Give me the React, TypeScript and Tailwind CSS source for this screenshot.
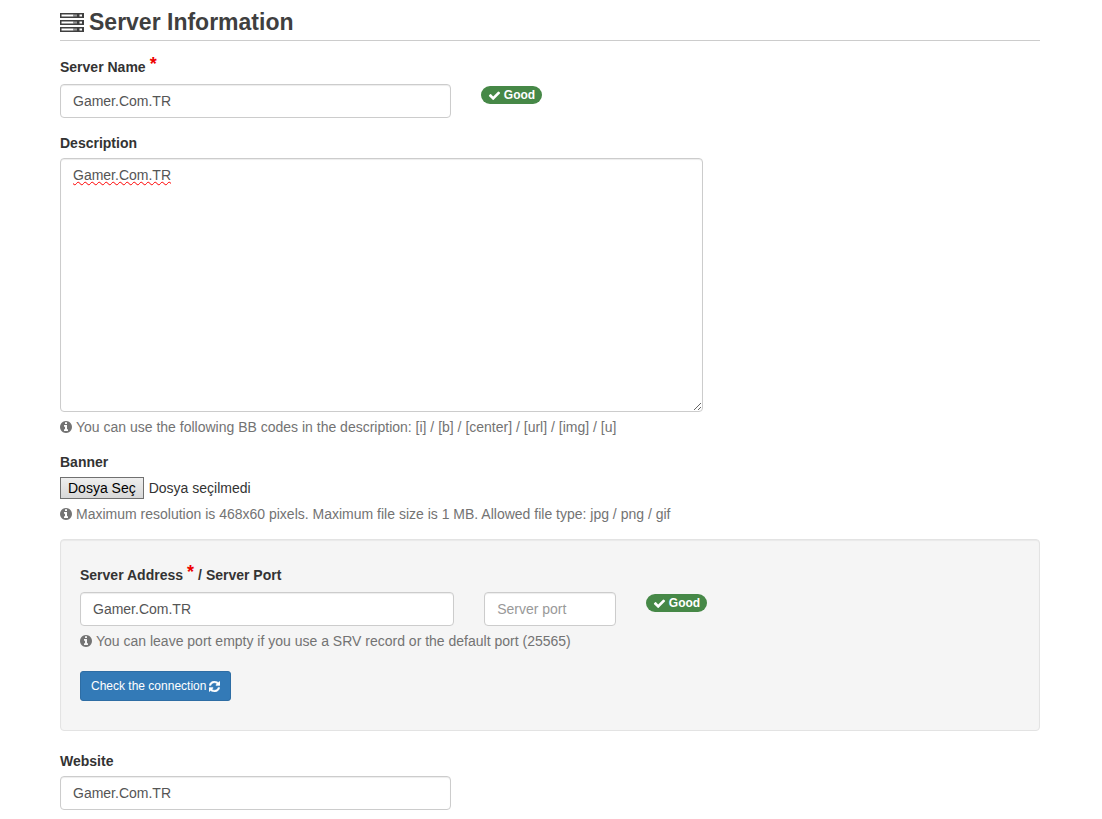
import { useState } from 'react'
import type { ReactNode } from 'react'

const controlClass =
  'block w-full rounded border border-[#ccc] bg-white px-3 text-sm leading-5 text-[#555] shadow-[inset_0_1px_1px_rgba(0,0,0,0.075)] outline-none placeholder:text-[#999] focus:border-[#66afe9]'

function ServerIcon() {
  return (
    <svg viewBox="0 0 24 19" className="h-[19px] w-6 shrink-0" aria-hidden="true">
      {[0, 7, 14].map((y) => (
        <g key={y}>
          <rect x="0" y={y} width="24" height="5" fill="#3f3f3f" />
          <rect x="1.5" y={y + 1.5} width="12" height="2" fill="#fff" />
          <rect x="13.5" y={y + 1.5} width="3.5" height="2" fill="#999" />
          <rect x="19.5" y={y + 1.5} width="2.5" height="2" fill="#fff" />
        </g>
      ))}
    </svg>
  )
}

function InfoIcon() {
  return (
    <svg viewBox="128 128 1536 1536" className="mr-1 h-3 w-3 shrink-0" fill="currentColor" aria-hidden="true">
      <path d="M1152 1376v-160q0-14-9-23t-23-9h-96v-512q0-14-9-23t-23-9h-320q-14 0-23 9t-9 23v160q0 14 9 23t23 9h96v320h-96q-14 0-23 9t-9 23v160q0 14 9 23t23 9h448q14 0 23-9t9-23zm-128-896v-160q0-14-9-23t-23-9h-192q-14 0-23 9t-9 23v160q0 14 9 23t23 9h192q14 0 23-9t9-23zm640 416q0 209-103 385.5t-279.5 279.5-385.5 103-385.5-103-279.5-279.5-103-385.5 103-385.5 279.5-279.5 385.5-103 385.5 103 279.5 279.5 103 385.5z" />
    </svg>
  )
}

function CheckIcon() {
  return (
    <svg viewBox="0 0 1792 1792" className="h-[13px] w-[13px] shrink-0" fill="currentColor" aria-hidden="true">
      <path d="M1671 566q0 40-28 68l-724 724-136 136q-28 28-68 28t-68-28l-136-136-362-362q-28-28-28-68t28-68l136-136q28-28 68-28t68 28l294 295 656-657q28-28 68-28t68 28l136 136q28 28 28 68z" />
    </svg>
  )
}

function RefreshIcon() {
  return (
    <svg
      viewBox="128 128 1536 1536"
      className="h-[11px] w-[11px] shrink-0"
      fill="currentColor"
      stroke="currentColor"
      strokeWidth="60"
      aria-hidden="true"
    >
      <path d="M1639 1056q0 5-1 7-64 268-268 434.5t-478 166.5q-146 0-282.5-55t-243.5-157l-129 129q-19 19-45 19t-45-19-19-45v-448q0-26 19-45t45-19h448q26 0 45 19t19 45-19 45l-137 137q71 66 161 102t187 36q134 0 250-65t186-179q11-17 53-117 8-23 30-23h192q13 0 22.5 9.5t9.5 22.5zm25-800v448q0 26-19 45t-45 19h-448q-26 0-45-19t-19-45 19-45l138-138q-148-137-349-137-134 0-250 65t-186 179q-11 17-53 117-8 23-30 23h-199q-13 0-22.5-9.5t-9.5-22.5v-7q65-268 270-434.5t480-166.5q146 0 284 55.5t245 156.5l130-129q19-19 45-19t45 19 19 45z" />
    </svg>
  )
}

function Required() {
  return <span className="text-lg leading-3.5 font-bold text-[#e00]">*</span>
}

function Hint({ children }: { children: ReactNode }) {
  return (
    <p className="mt-[5px] flex items-center text-sm leading-5 text-[#737373]">
      <InfoIcon />
      {children}
    </p>
  )
}

function GoodBadge() {
  return (
    <span className="mt-0.5 inline-flex h-[18px] items-center gap-[3px] rounded-full bg-[#468847] px-[7px] text-xs font-bold text-white">
      <CheckIcon />
      Good
    </span>
  )
}

export default function App() {
  const [name, setName] = useState('Gamer.Com.TR')
  const [description, setDescription] = useState('Gamer.Com.TR')
  const [fileName, setFileName] = useState('')
  const [address, setAddress] = useState('Gamer.Com.TR')
  const [port, setPort] = useState('')
  const [website, setWebsite] = useState('Gamer.Com.TR')

  return (
    <form
      className="bg-white pt-2 pr-[62px] pb-2 pl-[60px] font-['Liberation_Sans',Arial,sans-serif] text-sm leading-5 text-[#333]"
      onSubmit={(e) => e.preventDefault()}
    >
      <h1 className="mb-4 flex items-center gap-[5px] border-b border-[#ccc] pb-1 text-[23px] leading-7 font-bold text-[#3f3f3f]">
        <ServerIcon />
        Server Information
      </h1>

      {/* Server name */}
      <div className="mb-[15px]">
        <label htmlFor="server-name" className="mb-[7px] flex gap-1 font-bold">
          Server Name <Required />
        </label>
        <div className="grid grid-cols-12 items-start gap-[30px]">
          <div className="col-span-5">
            <input
              id="server-name"
              type="text"
              className={`${controlClass} h-[34px]`}
              value={name}
              onChange={(e) => setName(e.target.value)}
            />
          </div>
          <div className="col-span-3 flex">
            <GoodBadge />
          </div>
        </div>
      </div>

      {/* Description */}
      <div className="mb-[15px]">
        <label htmlFor="description" className="mb-[5px] block font-bold">
          Description
        </label>
        <div className="grid grid-cols-12 gap-[30px]">
          <textarea
            id="description"
            className={`${controlClass} col-span-8 h-[254px] resize py-1.5 underline decoration-[#f00] decoration-wavy decoration-1`}
            value={description}
            onChange={(e) => setDescription(e.target.value)}
          />
        </div>
        <Hint>You can use the following BB codes in the description: [i] / [b] / [center] / [url] / [img] / [u]</Hint>
      </div>

      {/* Banner */}
      <div className="mb-[15px]">
        <label htmlFor="banner" className="mb-[5px] block font-bold">
          Banner
        </label>
        <div className="relative flex items-center gap-[5px]">
          <input
            id="banner"
            type="file"
            accept=".jpg,.png,.gif"
            className="peer sr-only"
            onChange={(e) => setFileName(e.target.files?.[0]?.name ?? '')}
          />
          <label
            htmlFor="banner"
            className="h-[22px] border border-[#707070] bg-linear-to-b from-[#eee] to-[#d8d8d8] px-[7px] leading-5 text-black peer-focus-visible:border-[#66afe9]"
          >
            Dosya Seç
          </label>
          <span>{fileName || 'Dosya seçilmedi'}</span>
        </div>
        <Hint>Maximum resolution is 468x60 pixels. Maximum file size is 1 MB. Allowed file type: jpg / png / gif</Hint>
      </div>

      {/* Address and port */}
      <div className="mb-5 rounded border border-[#e3e3e3] bg-[#f5f5f5] px-[19px] pt-[25px] pb-[29px] shadow-[inset_0_1px_1px_rgba(0,0,0,0.05)]">
        <div className="mb-[7px] flex gap-1 font-bold">
          <label htmlFor="server-address" className="flex gap-1">
            Server Address <Required />
          </label>
          <span>/</span>
          <label htmlFor="server-port">Server Port</label>
        </div>
        <div className="grid grid-cols-12 items-start gap-[30px]">
          <div className="col-span-5">
            <input
              id="server-address"
              type="text"
              className={`${controlClass} h-[34px]`}
              value={address}
              onChange={(e) => setAddress(e.target.value)}
            />
          </div>
          <div className="col-span-2">
            <input
              id="server-port"
              type="text"
              placeholder="Server port"
              className={`${controlClass} h-[34px]`}
              value={port}
              onChange={(e) => setPort(e.target.value)}
            />
          </div>
          <div className="col-span-3 flex">
            <GoodBadge />
          </div>
        </div>
        <Hint>You can leave port empty if you use a SRV record or the default port (25565)</Hint>
        <button
          type="button"
          className="mt-5 flex h-[30px] cursor-pointer items-center gap-[3px] rounded-[3px] border border-[#2e6da4] bg-[#337ab7] px-2.5 text-xs text-white hover:bg-[#286090]"
        >
          Check the connection
          <RefreshIcon />
        </button>
      </div>

      {/* Website */}
      <div>
        <label htmlFor="website" className="mb-[5px] block font-bold">
          Website
        </label>
        <div className="grid grid-cols-12 gap-[30px]">
          <input
            id="website"
            type="text"
            className={`${controlClass} col-span-5 h-[34px]`}
            value={website}
            onChange={(e) => setWebsite(e.target.value)}
          />
        </div>
      </div>
    </form>
  )
}
